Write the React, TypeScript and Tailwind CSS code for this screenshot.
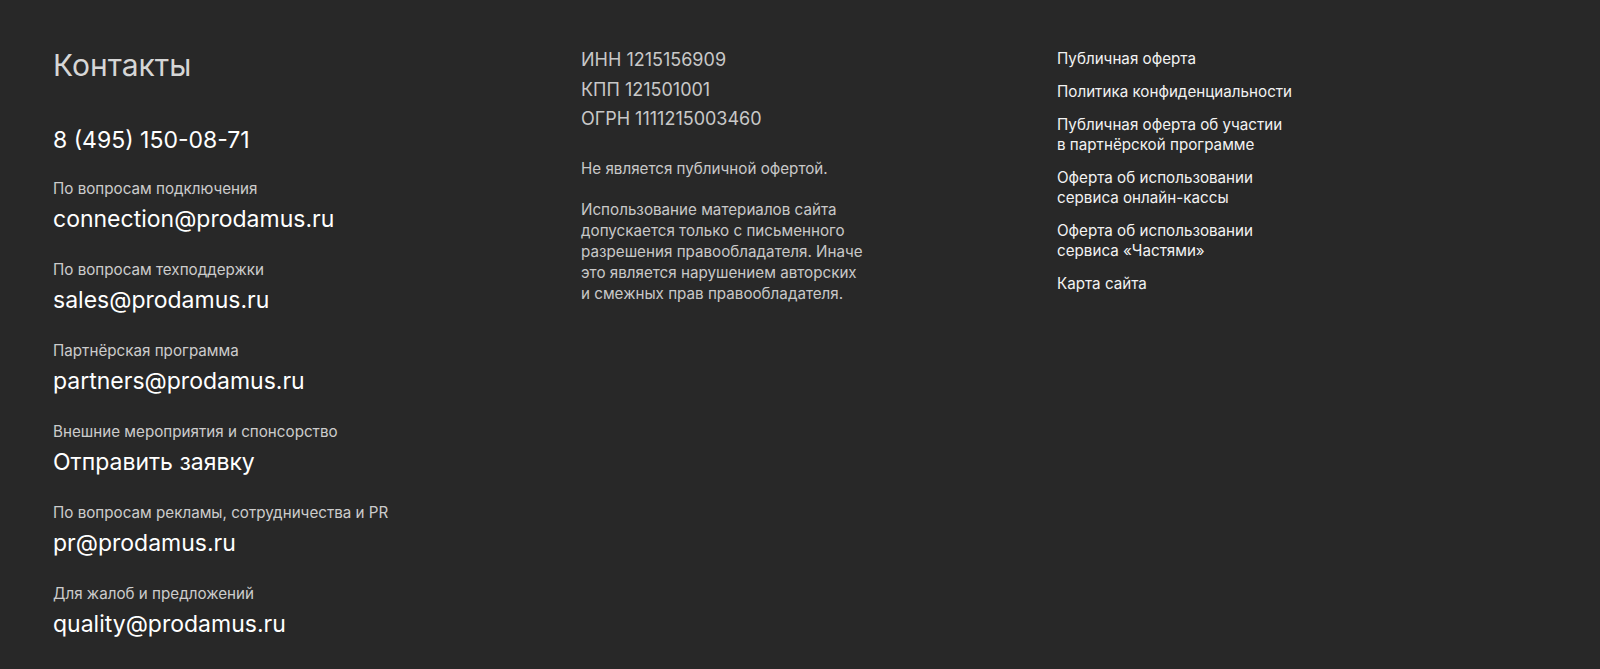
import React from 'react';

const contacts = [
  { label: 'По вопросам подключения', value: 'connection@prodamus.ru' },
  { label: 'По вопросам техподдержки', value: 'sales@prodamus.ru' },
  { label: 'Партнёрская программа', value: 'partners@prodamus.ru' },
  { label: 'Внешние мероприятия и спонсорство', value: 'Отправить заявку' },
  { label: 'По вопросам рекламы, сотрудничества и PR', value: 'pr@prodamus.ru' },
  { label: 'Для жалоб и предложений', value: 'quality@prodamus.ru' },
];

const docs = [
  ['Публичная оферта'],
  ['Политика конфиденциальности'],
  ['Публичная оферта об участии', 'в партнёрской программе'],
  ['Оферта об использовании', 'сервиса онлайн-кассы'],
  ['Оферта об использовании', 'сервиса «Частями»'],
  ['Карта сайта'],
];

const App: React.FC = () => {
  return (
    <footer
      className="min-h-[669px] bg-[#282828] pl-[53px] pt-[45px] pb-[30px]"
      style={{ fontFamily: 'Inter, "Noto Sans", sans-serif' }}
    >
      <div className="flex">
        {/* contacts */}
        <div className="w-[528px] shrink-0">
          <h2 className="text-[30px] leading-[40px] text-[#d6d6d6]">Контакты</h2>
          <a href="#" className="mt-[40px] mb-[-2px] block text-[23px] leading-[30px] text-white">
            8 (495) 150-08-71
          </a>
          {contacts.map((c) => (
            <div key={c.label} className="mt-[26px] flex flex-col gap-[5px]">
              <span className="text-[15.2px] leading-[20px] text-[#cccccc]">{c.label}</span>
              <a href="#" className="text-[23px] leading-[30px] text-white">
                {c.value}
              </a>
            </div>
          ))}
        </div>

        {/* requisites */}
        <div className="w-[476px] shrink-0 text-[#c8c8c8]">
          <p className="text-[18px] leading-[29.5px]">ИНН 1215156909</p>
          <p className="text-[18px] leading-[29.5px]">КПП 121501001</p>
          <p className="text-[18px] leading-[29.5px]">ОГРН 1111215003460</p>
          <p className="mt-[24px] text-[15.2px] leading-[21px]">Не является публичной офертой.</p>
          <p className="mt-[20px] text-[15.2px] leading-[21px]">
            Использование материалов сайта
            <br />
            допускается только с письменного
            <br />
            разрешения правообладателя. Иначе
            <br />
            это является нарушением авторских
            <br />
            и смежных прав правообладателя.
          </p>
        </div>

        {/* documents */}
        <nav className="flex flex-col gap-[13px] pt-[4px]">
          {docs.map((lines, i) => (
            <a key={i} href="#" className="text-[15.2px] leading-[20px] text-[#f2f2f2]">
              {lines.map((l, j) => (
                <span key={j} className="block">
                  {l}
                </span>
              ))}
            </a>
          ))}
        </nav>
      </div>
    </footer>
  );
};

export default App;
